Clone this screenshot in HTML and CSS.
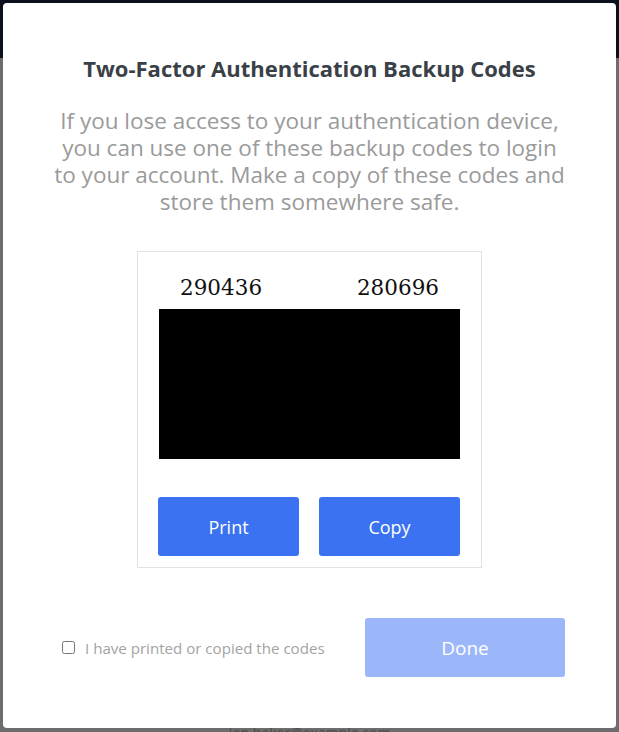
FILE: index.html
```html
<!DOCTYPE html>
<html>
<head>
<meta charset="utf-8">
<link rel="stylesheet" href="styles.css">
</head>
<body>
<div class="page">
  <div class="topbar"></div>
  <div class="content">
    <div class="under-text">jon.baker@example.com</div>
  </div>
</div>
<div class="modal">
  <h1 class="title">Two-Factor Authentication Backup Codes</h1>
  <p class="intro">If you lose access to your authentication device, you can use one of these backup codes to login to your account. Make a copy of these codes and store them somewhere safe.</p>
  <div class="codes-box">
    <div class="codes-row">
      <span class="code">290436</span>
      <span class="code">280696</span>
    </div>
    <div class="redacted"></div>
    <div class="actions">
      <button class="btn">Print</button>
      <button class="btn">Copy</button>
    </div>
  </div>
  <div class="footer">
    <label class="confirm"><input type="checkbox" class="check"><span>I have printed or copied the codes</span></label>
    <button class="btn btn-done">Done</button>
  </div>
</div>
</body>
</html>
```
FILE: styles.css
```css
html, body {
  margin: 0;
  padding: 0;
  height: 100%;
}
body {
  font-family: "Open Sans", "Liberation Sans", sans-serif;
  background: #6d6d6d;
  overflow: hidden;
}
.page {
  display: flex;
  flex-direction: column;
  height: 100%;
}
.topbar {
  height: 58px;
  background: #0b111c;
}
.content {
  flex: 1;
  background: #6d6d6d;
  display: flex;
  flex-direction: column;
  justify-content: flex-end;
  align-items: center;
}
.under-text {
  color: #4a4a4a;
  font-size: 14px;
  line-height: 14px;
  margin-bottom: -8px;
}
.modal {
  position: fixed;
  top: 3px;
  left: 3px;
  width: 613px;
  height: 725px;
  background: #fff;
  border-radius: 4px;
  box-sizing: border-box;
  padding-top: 53px;
  display: flex;
  flex-direction: column;
  align-items: center;
}
.title {
  margin: 0;
  font-size: 22px;
  line-height: 24px;
  font-weight: 700;
  color: #3a4047;
}
.intro {
  margin: 27px 0 0;
  width: 518px;
  text-align: center;
  font-size: 22.5px;
  line-height: 27px;
  color: #9a9a9a;
}
.codes-box {
  margin-top: 36px;
  width: 345px;
  box-sizing: border-box;
  border: 1px solid #dfe3e5;
  padding: 20px 21px 11px;
  display: flex;
  flex-direction: column;
}
.codes-row {
  display: flex;
  justify-content: space-between;
  padding: 0 21px 0 21px;
  height: 30px;
  align-items: center;
}
.code {
  font-family: "DejaVu Serif", serif;
  font-size: 21.5px;
  color: #111;
}
.redacted {
  margin-top: 7px;
  height: 150px;
  background: #000;
}
.actions {
  margin-top: 38px;
  display: flex;
  justify-content: space-between;
  margin-left: -1px;
}
.btn {
  width: 141px;
  height: 59px;
  border: none;
  border-radius: 3px;
  background: #3a72f2;
  color: #fff;
  font-family: "Open Sans", "Liberation Sans", sans-serif;
  font-size: 18px;
  padding: 0;
}
.footer {
  margin-top: 50px;
  width: 511px;
  box-sizing: border-box;
  display: flex;
  justify-content: space-between;
  align-items: center;
  padding-left: 8px;
}
.confirm {
  display: flex;
  align-items: center;
  gap: 10px;
  font-size: 15.1px;
  color: #a3a3a3;
}
.check {
  margin: 0;
  width: 13px;
  height: 13px;
}
.btn-done {
  width: 200px;
  background: #9bb7fa;
  font-size: 19px;
}
```
